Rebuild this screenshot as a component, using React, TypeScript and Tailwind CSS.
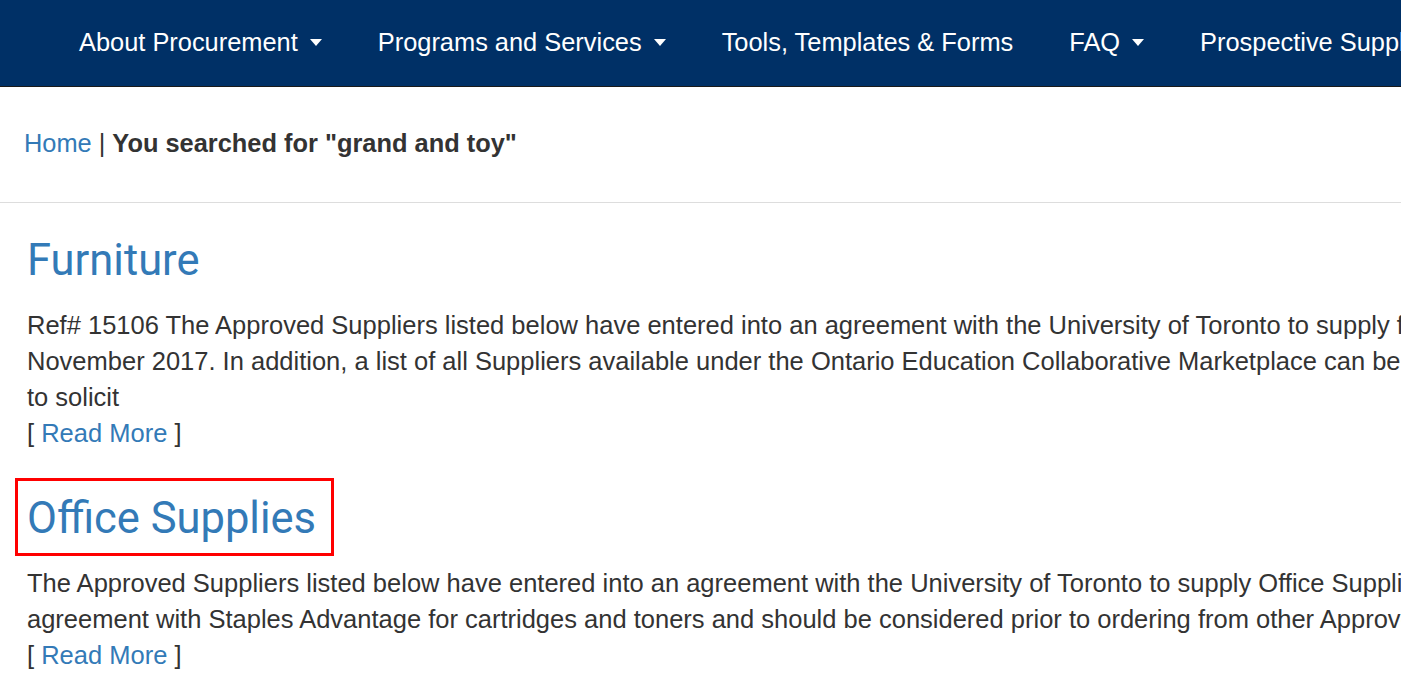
import React from "react";

const Caret = () => (
  <svg width="12" height="7" viewBox="0 0 12 7" className="ml-[12px] mt-[2px]">
    <polygon points="0,0 12,0 6,7" fill="white" />
  </svg>
);

const navItems = [
  { label: "About Procurement", caret: true },
  { label: "Programs and Services", caret: true },
  { label: "Tools, Templates & Forms", caret: false },
  { label: "FAQ", caret: true },
  { label: "Prospective Suppliers", caret: false },
];

export default function App() {
  return (
    <div className="w-full min-h-[689px] bg-white overflow-hidden">
      <nav className="h-[87px] bg-[#003066] border-b border-[#1a1a1a] flex items-center pl-[79px] pb-[2px] whitespace-nowrap font-['Liberation_Sans',Arial,sans-serif] text-[25.4px] text-white">
        <div className="flex items-center gap-[56px]">
          {navItems.map((n) => (
            <div key={n.label} className="flex items-center shrink-0">
              <span>{n.label}</span>
              {n.caret && <Caret />}
            </div>
          ))}
        </div>
      </nav>

      <div className="h-[116px] flex items-center pl-[24px] pb-[2px] border-b border-[#dddddd] font-['Liberation_Sans',Arial,sans-serif] text-[25.4px] text-[#333333] whitespace-nowrap">
        <a className="text-[#337ab7]">Home</a>
        <span className="mx-[7px]">|</span>
        <span className="font-bold">You searched for "grand and toy"</span>
      </div>

      <div className="pl-[27px] pt-[32px] whitespace-nowrap text-[#333333]">
        <h2 className="font-['Roboto',sans-serif] text-[43.5px] leading-[52px] text-[#337ab7]">Furniture</h2>
        <div className="mt-[20px] font-['Liberation_Sans',Arial,sans-serif] text-[25.5px] leading-[36px]">
          <div>Ref# 15106 The Approved Suppliers listed below have entered into an agreement with the University of Toronto to supply furniture and related services</div>
          <div>November 2017. In addition, a list of all Suppliers available under the Ontario Education Collaborative Marketplace can be found below for departments</div>
          <div>to solicit</div>
          <div>[ <a className="text-[#337ab7]">Read More</a> ]</div>
        </div>

        <div className="mt-[27px] -ml-[12px] inline-block border-[3px] border-[#ff0000] pl-[9px] pr-[15px] pt-[12px] pb-[8px]">
          <h2 className="font-['Roboto',sans-serif] text-[43.5px] leading-[52px] text-[#337ab7]">Office Supplies</h2>
        </div>
        <div className="mt-[9px] font-['Liberation_Sans',Arial,sans-serif] text-[25.5px] leading-[36px]">
          <div>The Approved Suppliers listed below have entered into an agreement with the University of Toronto to supply Office Supplies. The University has an</div>
          <div>agreement with Staples Advantage for cartridges and toners and should be considered prior to ordering from other Approved Suppliers.</div>
          <div>[ <a className="text-[#337ab7]">Read More</a> ]</div>
        </div>
      </div>
    </div>
  );
}
